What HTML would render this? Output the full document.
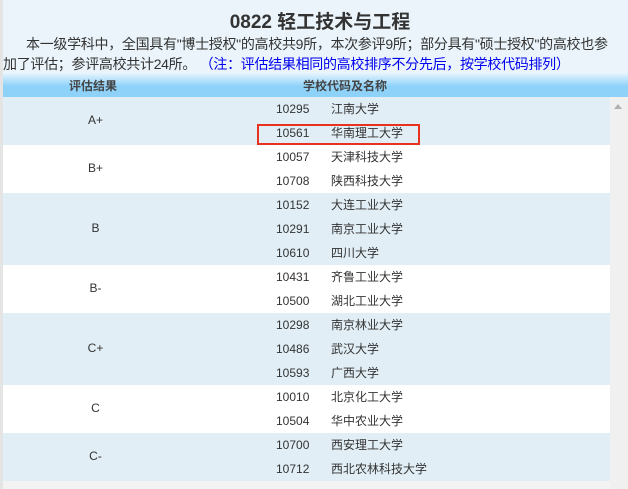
<!DOCTYPE html>
<html><head><meta charset="utf-8"><style>
*{margin:0;padding:0;box-sizing:border-box}
html,body{width:628px;height:489px;overflow:hidden}
body{background:#f3f3f3;font-family:"Liberation Sans","Noto Sans CJK SC",sans-serif;color:#333;position:relative}
.top{position:absolute;left:3px;top:0;width:625px;height:73px;background:#eaf4fa}
.title{position:absolute;top:7px;left:0;width:640px;text-align:center;font-size:19px;font-weight:bold;color:#333}
.p{position:absolute;left:3px;font-size:14px;color:#333;white-space:nowrap;letter-spacing:-0.3px}
.hdr{position:absolute;left:3px;top:73px;width:625px;height:24px;background:linear-gradient(#e6f5fe,#8ed2fa 55%,#8ed2fa);font-size:12px;font-weight:bold;color:#444}
.band{position:absolute;left:3px;width:607px}
.blue{background:#e1eef5}.white{background:#fff}
.rk{position:absolute;left:0;width:185px;text-align:center;font-size:12px;color:#333}
.row{position:absolute;left:3px;width:600px;height:24px;line-height:24px;font-size:12px;color:#333;white-space:nowrap}
.code{position:absolute;left:273px}
.name{position:absolute;left:328px}
</style></head><body>
<div style="position:absolute;left:0;top:0;width:3px;height:489px;background:#e4e4e4"></div>
<div class="top"></div>
<div class="title">0822 轻工技术与工程</div>
<div class="p" style="top:34px;left:26px">本一级学科中，全国具有"博士授权"的高校共9所，本次参评9所；部分具有"硕士授权"的高校也参</div>
<div class="p" style="top:54px;left:3px">加了评估；参评高校共计24所。 <span style="color:#0000ee">（注：评估结果相同的高校排序不分先后，按学校代码排列）</span></div>
<div class="hdr"><span style="position:absolute;left:66px;top:4px">评估结果</span><span style="position:absolute;left:300px;top:4px">学校代码及名称</span></div>
<div style="position:absolute;left:610px;top:97px;width:18px;height:392px;background:#f0f0f0"></div>
<div style="position:absolute;left:614px;top:104px;width:0;height:0;border-left:4px solid transparent;border-right:4px solid transparent;border-bottom:5px solid #b0b0b0"></div>

<div class="band blue" style="top:97px;height:48px"><div class="rk" style="top:16px">A+</div></div>
<div class="band white" style="top:145px;height:48px"><div class="rk" style="top:16px">B+</div></div>
<div class="band blue" style="top:193px;height:72px"><div class="rk" style="top:28px">B</div></div>
<div class="band white" style="top:265px;height:48px"><div class="rk" style="top:16px">B-</div></div>
<div class="band blue" style="top:313px;height:72px"><div class="rk" style="top:28px">C+</div></div>
<div class="band white" style="top:385px;height:48px"><div class="rk" style="top:16px">C</div></div>
<div class="band blue" style="top:433px;height:48px"><div class="rk" style="top:16px">C-</div></div>

<div class="row" style="top:97px"><span class="code">10295</span><span class="name">江南大学</span></div>
<div class="row" style="top:121px"><span class="code">10561</span><span class="name">华南理工大学</span></div>
<div style="position:absolute;left:257px;top:124px;width:163px;height:21px;border:2px solid #e8321f"></div>
<div class="row" style="top:145px"><span class="code">10057</span><span class="name">天津科技大学</span></div>
<div class="row" style="top:169px"><span class="code">10708</span><span class="name">陕西科技大学</span></div>
<div class="row" style="top:193px"><span class="code">10152</span><span class="name">大连工业大学</span></div>
<div class="row" style="top:217px"><span class="code">10291</span><span class="name">南京工业大学</span></div>
<div class="row" style="top:241px"><span class="code">10610</span><span class="name">四川大学</span></div>
<div class="row" style="top:265px"><span class="code">10431</span><span class="name">齐鲁工业大学</span></div>
<div class="row" style="top:289px"><span class="code">10500</span><span class="name">湖北工业大学</span></div>
<div class="row" style="top:313px"><span class="code">10298</span><span class="name">南京林业大学</span></div>
<div class="row" style="top:337px"><span class="code">10486</span><span class="name">武汉大学</span></div>
<div class="row" style="top:361px"><span class="code">10593</span><span class="name">广西大学</span></div>
<div class="row" style="top:385px"><span class="code">10010</span><span class="name">北京化工大学</span></div>
<div class="row" style="top:409px"><span class="code">10504</span><span class="name">华中农业大学</span></div>
<div class="row" style="top:433px"><span class="code">10700</span><span class="name">西安理工大学</span></div>
<div class="row" style="top:457px"><span class="code">10712</span><span class="name">西北农林科技大学</span></div>
</body></html>
